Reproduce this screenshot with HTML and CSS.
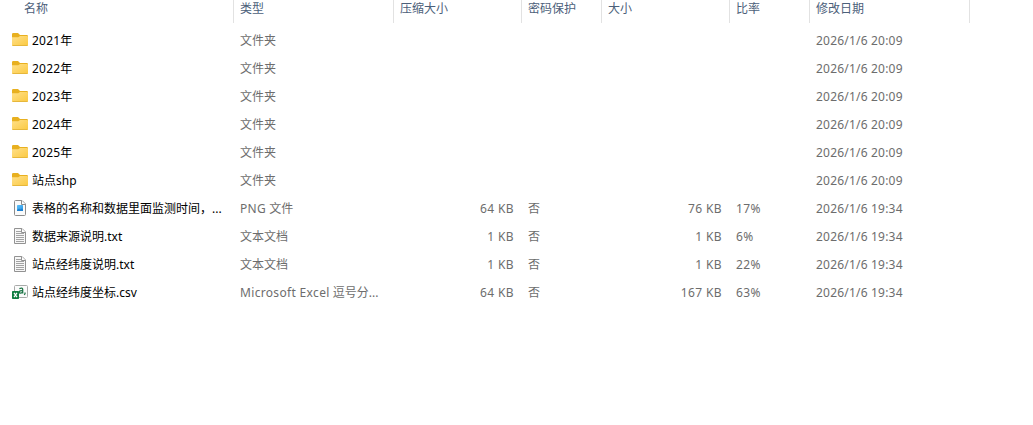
FILE: index.html
```
<!DOCTYPE html>
<html lang="zh-CN">
<head>
    <meta charset="UTF-8">
    <meta name="viewport" content="width=device-width, initial-scale=1.0">
    <title>文件列表</title>
    <link rel="stylesheet" href="styles.css">
</head>
<body>

    <!-- Icons shared by the rows -->
    <svg class="sprite" width="0" height="0">
        <defs>
            <linearGradient id="folderFill" x1="0" y1="0" x2="1" y2="1">
                <stop offset="0" stop-color="#ffe08a"/>
                <stop offset="1" stop-color="#fbc940"/>
            </linearGradient>
            <linearGradient id="pictureFill" x1="0" y1="0" x2="1" y2="1">
                <stop offset="0" stop-color="#5cc0f8"/>
                <stop offset="1" stop-color="#2a96e6"/>
            </linearGradient>
        </defs>
        <symbol id="folder" viewBox="0 0 16 16">
            <path d="M0 2.2Q0 1 1.2 1H6L8 3H14.8Q16 3 16 4.2V8H0Z" fill="#e8b020"/>
            <path d="M0 5.2H6.3L8 4H15Q16 4 16 5V13Q16 14 15 14H1Q0 14 0 13Z" fill="url(#folderFill)"/>
            <path d="M.5 13.5H15.5" stroke="#e6b73c"/>
        </symbol>
        <symbol id="png" viewBox="0 0 16 16">
            <path d="M2.5 1.5Q2.5.5 3.5.5H10L13.5 4V14.5Q13.5 15.5 12.5 15.5H3.5Q2.5 15.5 2.5 14.5Z" fill="#fafafa" stroke="#8c8c8c"/>
            <path d="M9.5.5V4.5H13.5" fill="#fff" stroke="#8c8c8c"/>
            <rect x="5" y="5" width="6" height="6" rx=".7" fill="url(#pictureFill)"/>
            <path d="M5 10L7 8.6L8.2 9.4L9.5 8.4L11 9.4V11H5Z" fill="#1c80d2"/>
        </symbol>
        <symbol id="txt" viewBox="0 0 16 16">
            <path d="M2.5.5H10L13.5 4V15.5H2.5Z" fill="#f7f7f7" stroke="#929292"/>
            <path d="M9.5.5V4.5H13.5" fill="#fff" stroke="#929292"/>
            <path d="M4 3.5H9M4 5.5H12M4 7.5H12M4 9.5H12M4 11.5H12M4 13.5H12" stroke="#a3a3a3"/>
        </symbol>
        <symbol id="csv" viewBox="0 0 16 16">
            <rect x="2.5" y="1.5" width="13" height="12" rx="1" fill="#fbfbfb" stroke="#a8aaa9"/>
            <path d="M7.4 4.6Q10.7 3.3 10.7 5.4V9.5M10.7 6.7Q7.3 6.5 7.3 8.1Q7.3 9.2 8.7 9.1Q10 9 10.7 7.7" fill="none" stroke="#1d7547" stroke-width="1.3"/>
            <path d="M13 8.5V9.7L12.3 11" fill="none" stroke="#1d7547" stroke-width="1.3"/>
            <rect x="0" y="7" width="7" height="8" rx=".7" fill="#107c41"/>
            <path d="M2 8.8L5 13.2M5 8.8L2 13.2" stroke="#fff" stroke-width="1.2"/>
        </symbol>
    </svg>

    <table class="file-list">
        <colgroup>
            <col class="col-name">
            <col class="col-type">
            <col class="col-packed">
            <col class="col-locked">
            <col class="col-size">
            <col class="col-ratio">
            <col class="col-date">
        </colgroup>
        <thead>
            <tr>
                <th>名称</th>
                <th>类型</th>
                <th>压缩大小</th>
                <th>密码保护</th>
                <th>大小</th>
                <th>比率</th>
                <th>修改日期</th>
            </tr>
        </thead>
        <tbody>
            <tr>
                <td class="name"><div><svg class="icon"><use href="#folder"/></svg><span><span class="num">2021</span>年</span></div></td>
                <td>文件夹</td><td></td><td></td><td></td><td></td>
                <td class="date">2026/1/6 20:09</td>
            </tr>
            <tr>
                <td class="name"><div><svg class="icon"><use href="#folder"/></svg><span><span class="num">2022</span>年</span></div></td>
                <td>文件夹</td><td></td><td></td><td></td><td></td>
                <td class="date">2026/1/6 20:09</td>
            </tr>
            <tr>
                <td class="name"><div><svg class="icon"><use href="#folder"/></svg><span><span class="num">2023</span>年</span></div></td>
                <td>文件夹</td><td></td><td></td><td></td><td></td>
                <td class="date">2026/1/6 20:09</td>
            </tr>
            <tr>
                <td class="name"><div><svg class="icon"><use href="#folder"/></svg><span><span class="num">2024</span>年</span></div></td>
                <td>文件夹</td><td></td><td></td><td></td><td></td>
                <td class="date">2026/1/6 20:09</td>
            </tr>
            <tr>
                <td class="name"><div><svg class="icon"><use href="#folder"/></svg><span><span class="num">2025</span>年</span></div></td>
                <td>文件夹</td><td></td><td></td><td></td><td></td>
                <td class="date">2026/1/6 20:09</td>
            </tr>
            <tr>
                <td class="name"><div><svg class="icon"><use href="#folder"/></svg><span>站点shp</span></div></td>
                <td>文件夹</td><td></td><td></td><td></td><td></td>
                <td class="date">2026/1/6 20:09</td>
            </tr>
            <tr>
                <td class="name"><div><svg class="icon"><use href="#png"/></svg><span>表格的名称和数据里面监测时间，...</span></div></td>
                <td><span class="latin">PNG</span> 文件</td>
                <td class="size">64 KB</td>
                <td>否</td>
                <td class="size">76 KB</td>
                <td class="ratio">17%</td>
                <td class="date">2026/1/6 19:34</td>
            </tr>
            <tr>
                <td class="name"><div><svg class="icon"><use href="#txt"/></svg><span>数据来源说明.txt</span></div></td>
                <td>文本文档</td>
                <td class="size">1 KB</td>
                <td>否</td>
                <td class="size">1 KB</td>
                <td class="ratio">6%</td>
                <td class="date">2026/1/6 19:34</td>
            </tr>
            <tr>
                <td class="name"><div><svg class="icon"><use href="#txt"/></svg><span>站点经纬度说明.txt</span></div></td>
                <td>文本文档</td>
                <td class="size">1 KB</td>
                <td>否</td>
                <td class="size">1 KB</td>
                <td class="ratio">22%</td>
                <td class="date">2026/1/6 19:34</td>
            </tr>
            <tr>
                <td class="name"><div><svg class="icon"><use href="#csv"/></svg><span>站点经纬度坐标.csv</span></div></td>
                <td><span class="latin">Microsoft Excel</span> 逗号分...</td>
                <td class="size">64 KB</td>
                <td>否</td>
                <td class="size">167 KB</td>
                <td class="ratio">63%</td>
                <td class="date">2026/1/6 19:34</td>
            </tr>
        </tbody>
    </table>

</body>
</html>
```
FILE: styles.css
```
body {
    margin: 0;
    background-color: #fff;
    font-family: "Noto Sans", "Noto Sans CJK SC", sans-serif;
    font-size: 12px;
    line-height: 18px;
    overflow: hidden;
}
.sprite {
    display: block;
}
.file-list {
    width: 970px;
    table-layout: fixed;
    border-collapse: separate;
    border-spacing: 0;
}
.col-name {
    width: 234px;
}
.col-type {
    width: 160px;
}
.col-packed {
    width: 128px;
}
.col-locked {
    width: 80px;
}
.col-size {
    width: 128px;
}
.col-ratio {
    width: 80px;
}
.col-date {
    width: 160px;
}
th {
    height: 23px;
    padding: 0 0 5px 6px;
    box-sizing: border-box;
    border-right: 1px solid #e2e2e2;
    color: #4c607a;
    font-weight: normal;
    text-align: left;
}
th:first-child {
    padding-left: 24px;
}
/* gap between the header and the first row */
tbody::before {
    content: "";
    display: table-row;
    height: 4px;
}
td {
    height: 28px;
    padding: 0 0 0 6px;
    box-sizing: border-box;
    color: #6d6d6d;
    white-space: nowrap;
}
.name {
    padding-left: 12px;
    color: #000;
}
.name div {
    display: flex;
    align-items: center;
    gap: 4px;
}
.icon {
    flex: none;
    width: 16px;
    height: 16px;
    margin-bottom: 2px;
}
.size {
    padding: 0 8px 0 0;
    text-align: right;
    letter-spacing: 0.4px;
}
.num, .date {
    letter-spacing: 0.2px;
}
.latin, .ratio {
    letter-spacing: 0.33px;
}
```
